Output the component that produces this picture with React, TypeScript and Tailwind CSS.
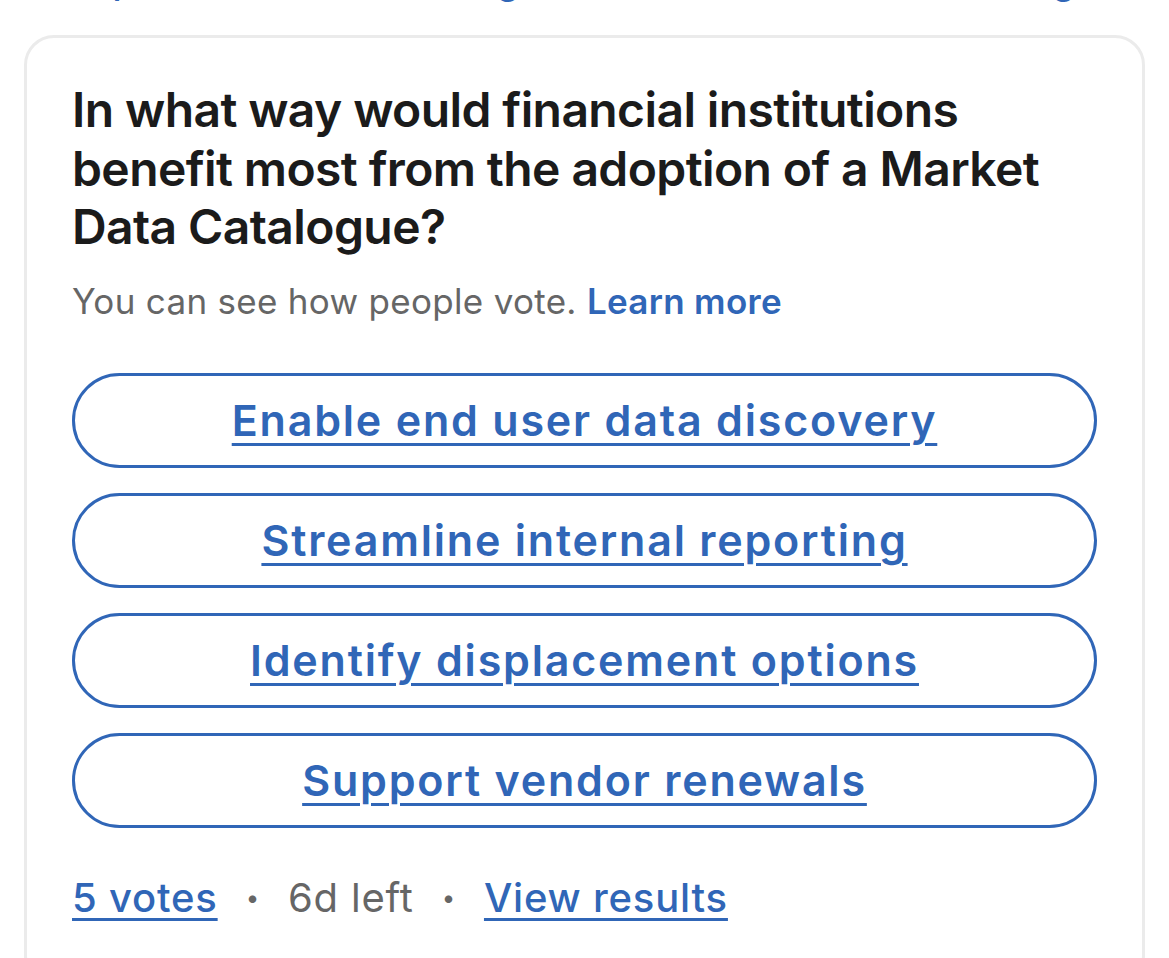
import { Fragment } from 'react';

const options = [
  'Enable end user data discovery',
  'Streamline internal reporting',
  'Identify displacement options',
  'Support vendor renewals',
];

export default function App() {
  return (
    <div className="h-[958px] w-full overflow-hidden bg-white font-['Inter','Liberation_Sans',sans-serif] text-[#1d1d1d]">
      {/* tail of the previous post, clipped at the top edge */}
      <div className="h-[9px] overflow-hidden pl-[72px]">
        <p className="-mt-[43px] whitespace-nowrap text-[36px] font-medium leading-[48px] text-[#3066b7]">
          expand more sources to get the most out of a data catalogue
        </p>
      </div>

      <div className="mx-[24px] mt-[26px] rounded-[30px] border-[3px] border-[#ebebeb] px-[45px] pt-[43px] pb-[60px]">
        <h2 className="text-[48px] font-semibold leading-[58.5px] tracking-[-0.6px] text-[#1b1b1b]">
          In what way would financial institutions benefit most from the adoption of a Market Data Catalogue?
        </h2>

        <p className="mt-[24px] text-[35px] leading-[40px] tracking-[0.3px] text-[#666666]">
          You can see how people vote.{' '}
          <a className="font-semibold text-[#3066b7]">Learn more</a>
        </p>

        <div className="mt-[52px] flex flex-col gap-[25px]">
          {options.map((o) => (
            <button
              key={o}
              className="flex h-[95px] w-full items-center justify-center rounded-full border-[3px] border-[#3066b7] bg-white"
            >
              <span className="text-[43px] font-semibold tracking-[1.8px] text-[#3066b7] underline decoration-[3px] underline-offset-[7px]">
                {o}
              </span>
            </button>
          ))}
        </div>

        <div className="mt-[46px] flex items-center text-[40px] leading-[48px] tracking-[0.8px]">
          {['5 votes', '6d left', 'View results'].map((t, i) => (
            <Fragment key={t}>
              {i > 0 && <span className="mx-[28px] text-[24px] text-[#666666]">•</span>}
              <span
                className={
                  i === 1
                    ? 'text-[#666666]'
                    : 'font-medium text-[#3066b7] underline decoration-[3px] underline-offset-[6px]'
                }
              >
                {t}
              </span>
            </Fragment>
          ))}
        </div>
      </div>
    </div>
  );
}
